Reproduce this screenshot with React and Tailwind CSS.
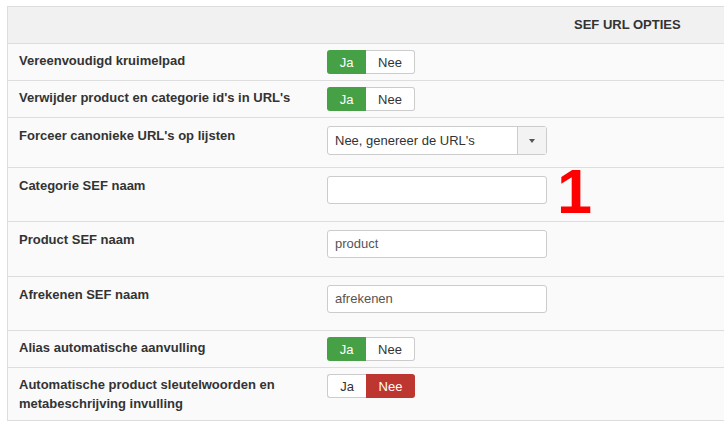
import React from 'react';

const rows = [
  { label: 'Vereenvoudigd kruimelpad', type: 'toggle', value: true, h: 37 },
  { label: "Verwijder product en categorie id's in URL's", type: 'toggle', value: true, h: 37 },
  { label: "Forceer canonieke URL's op lijsten", type: 'select', value: "Nee, genereer de URL's", h: 50 },
  { label: 'Categorie SEF naam', type: 'input', value: '', h: 54, marker: true },
  { label: 'Product SEF naam', type: 'input', value: 'product', h: 55 },
  { label: 'Afrekenen SEF naam', type: 'input', value: 'afrekenen', h: 54 },
  { label: 'Alias automatische aanvulling', type: 'toggle', value: true, h: 37 },
  {
    label: 'Automatische product sleutelwoorden en metabeschrijving invulling',
    type: 'toggle',
    value: false,
    h: 52,
  },
];

const Toggle = ({ on }) => (
  <div className="flex h-[24px] w-[88px] text-[13px] leading-none">
    <span
      className={
        on
          ? 'flex w-[39px] items-center justify-center rounded-l-[3px] bg-[#46a046] text-white'
          : 'flex w-[39px] items-center justify-center rounded-l-[3px] border border-r-0 border-[#cccccc] bg-white text-[#333]'
      }
    >
      Ja
    </span>
    <span
      className={
        on
          ? 'flex flex-1 items-center justify-center rounded-r-[3px] border border-l-0 border-[#cccccc] bg-white text-[#333]'
          : 'flex flex-1 items-center justify-center rounded-r-[3px] bg-[#bd362f] text-white'
      }
    >
      Nee
    </span>
  </div>
);

const Select = ({ value }) => (
  <div className="flex h-[29px] w-[220px] rounded-[3px] border border-[#cccccc] bg-white text-[13px] text-[#333]">
    <span className="flex flex-1 items-center pl-[7px]">{value}</span>
    <span className="flex w-[29px] items-center justify-center border-l border-[#cccccc] bg-[#f3f3f3]">
      <span className="h-0 w-0 border-x-[3.5px] border-t-[4px] border-x-transparent border-t-[#555]" />
    </span>
  </div>
);

const Input = ({ value }) => (
  <div className="flex h-[28px] w-[220px] items-center rounded-[3px] border border-[#cccccc] bg-white pl-[7px] text-[13px] text-[#555]">
    {value}
  </div>
);

export default function App() {
  return (
    <div
      className="min-h-[431px] w-[724px] overflow-hidden bg-white pl-[7px] pt-[6px]"
      style={{ fontFamily: '"Liberation Sans", Arial, sans-serif' }}
    >
      <div className="w-[740px] border-y border-l border-[#dddddd] bg-[#fafafa]">
        {/* Section header */}
        <div className="flex h-[37px] items-center border-b border-[#dddddd] bg-[#f1f1f1] pl-[566px] text-[13px] font-semibold text-[#333]">
          SEF URL OPTIES
        </div>

        {rows.map((r, i) => (
          <div
            key={r.label}
            className={
              i < rows.length - 1
                ? 'relative flex border-b border-[#dddddd]'
                : 'relative flex'
            }
            style={{ height: r.h }}
          >
            <div
              className={
                r.type === 'toggle'
                  ? 'w-[319px] pl-[11px] pr-[20px] pt-[7px] text-[13px] font-bold leading-[19px] text-[#333]'
                  : 'w-[319px] pl-[11px] pr-[20px] pt-[8px] text-[13px] font-bold leading-[19px] text-[#333]'
              }
            >
              {r.label}
            </div>
            <div className={r.type === 'toggle' ? 'pt-[6px]' : 'pt-[8px]'}>
              {r.type === 'toggle' && <Toggle on={r.value} />}
              {r.type === 'select' && <Select value={r.value} />}
              {r.type === 'input' && <Input value={r.value} />}
            </div>
            {r.marker && (
              <span className="absolute left-[549px] top-[-8px] text-[63px] font-bold leading-none text-[#ff0000]">
                1
              </span>
            )}
          </div>
        ))}
      </div>
    </div>
  );
}
